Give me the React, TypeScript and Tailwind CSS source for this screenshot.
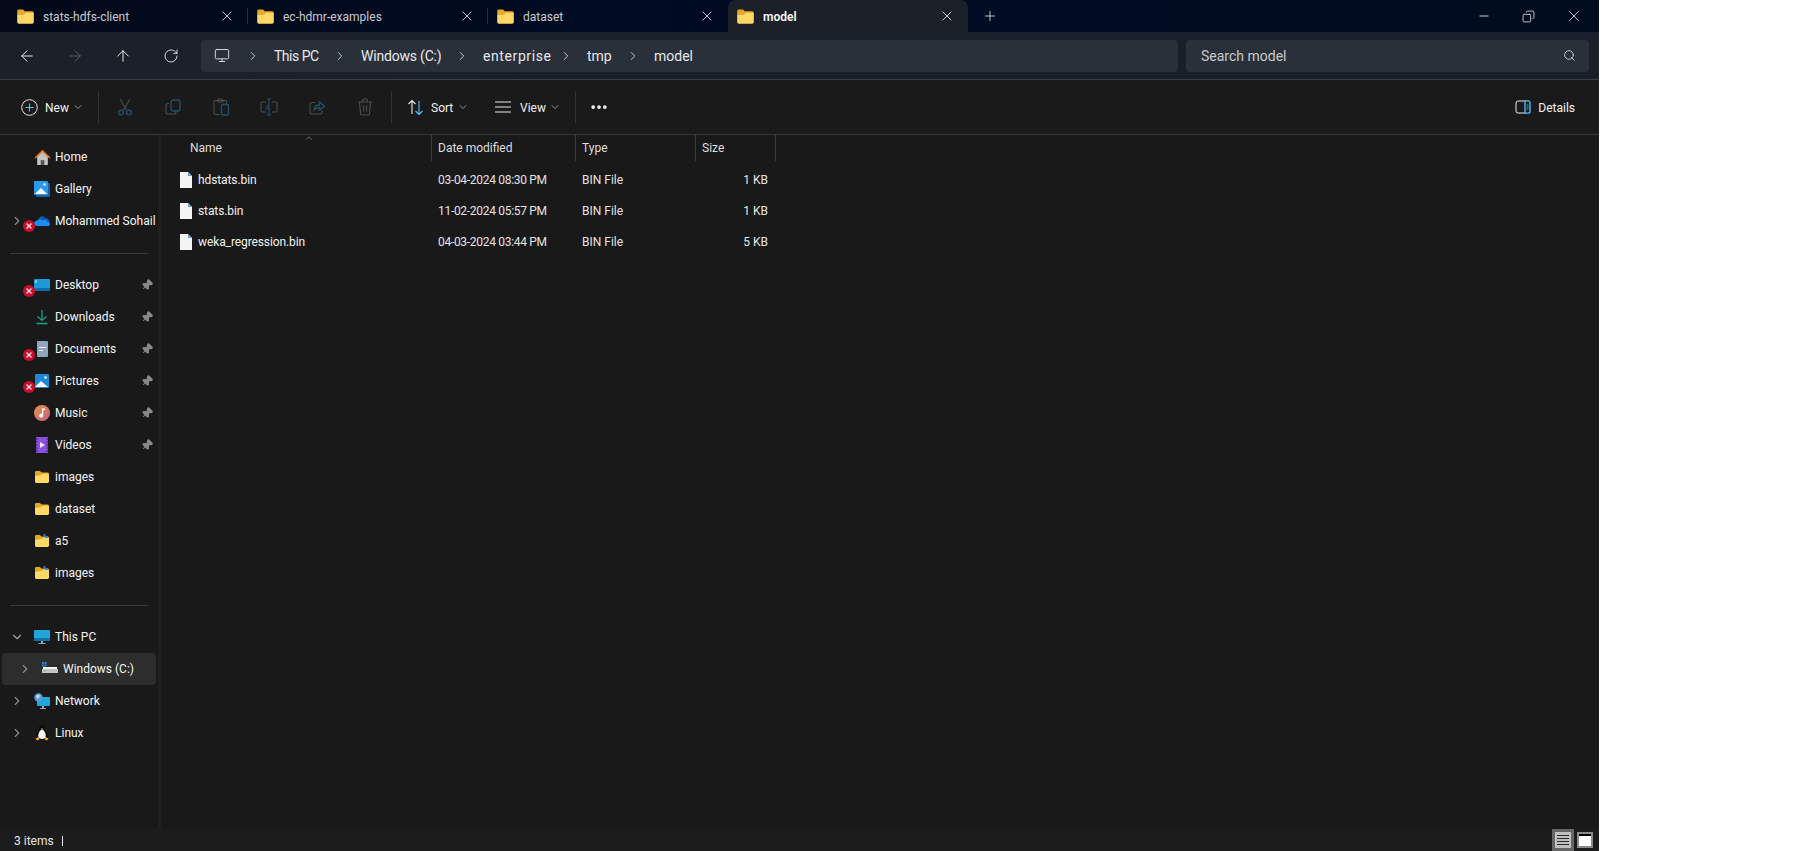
import { ArrowLeft, ArrowRight, ArrowUp, ChevronDown, ChevronRight, ChevronUp, Copy, Ellipsis, Minus, Monitor, Pin, Plus, RotateCw, Search, X } from 'lucide-react';

const font = "font-['Roboto','Liberation_Sans',sans-serif]";

const FolderIcon = ({ quick = false, className = 'w-4 h-4' }: { quick?: boolean; className?: string }) => (
  <svg viewBox="0 0 16 16" className={className}>
    <path d="M1 3.500C1 2.700 1.600 2 2.400 2h3.400l1.700 1.600h6.100c.8 0 1.400.6 1.400 1.400v1H1z" fill="#e8a726" />
    <path d="M1 6.200l6-.2 1.400-1.200h5.200c.8 0 1.400.6 1.400 1.400v6.400c0 .8-.6 1.400-1.400 1.400H2.400c-.8 0-1.400-.6-1.400-1.400z" fill="#ffd868" />
    {quick && <path d="M9.500 1h2v2h2v2h-2v-1h-2z" fill="#2a7fc4" />}
  </svg>
);

const FileIcon = () => (
  <svg viewBox="0 0 14 16" className="w-[14px] h-4 shrink-0">
    <path d="M1 0h8l4 4v12H1z" fill="#f4f4f4" />
    <path d="M9 0l4 4H9z" fill="#5aa5d6" />
  </svg>
);

const ErrorBadge = ({ top }: { top: string }) => (
  <span className={`absolute left-[-11px] flex h-3 w-3 items-center justify-center rounded-full bg-[#c80f2a] ${top}`}>
    <X className="h-2 w-2 text-[#f4d8dc]" strokeWidth={4} />
  </span>
);

const HomeIcon = () => (
  <svg viewBox="0 0 16 16" className="w-[17px] h-[17px] shrink-0">
    <path d="M3 7l5-5 5 5v8H3z" fill="#c4c4c4" />
    <path d="M6.300 15v-4.500h3.400V15z" fill="#555" />
    <path d="M0.500 8L8 .7 15.500 8l-1 1L8 3 1.500 9z" fill="#e8782a" />
  </svg>
);
const GalleryIcon = () => (
  <svg viewBox="0 0 16 16" className="w-4 h-4">
    <rect x="2" y="2" width="14" height="14" rx="1" fill="#1c5fa8" />
    <rect x="0" y="0" width="14" height="14" rx="1" fill="#2a9bea" />
    <path d="M1 13l6-6 6 6z" fill="#fff" />
    <circle cx="10.500" cy="3.500" r="1.200" fill="#fff" />
  </svg>
);
const CloudIcon = () => (
  <svg viewBox="0 0 16 12" className="w-4 h-3">
    <path d="M5 3.500C6 1 9.500 .5 11 3c2.500-.3 4.500 1.500 4.800 4L9 10H4z" fill="#0a5cb8" />
    <path d="M3.500 11C1.500 11 .2 9.700 .2 8.200s1.200-2.700 3-2.800C4.500 3.700 7 3.700 8.500 5.500 11 4.500 13 5.500 13.500 7.300c1.300-.3 2.300.3 2.500 1.200.2 1.300-.8 2.500-2 2.500z" fill="#1c8cf0" />
  </svg>
);
const DesktopIcon = () => (
  <svg viewBox="0 0 16 13" className="w-4 h-[13px]">
    <rect width="16" height="12" rx="1" fill="#1d9ad6" />
    <path d="M0 9h16v2a1 1 0 01-1 1H1a1 1 0 01-1-1z" fill="#0c6ea8" />
    <rect x="1.500" y="1" width="1" height="3" fill="#e9f6fc" />
  </svg>
);
const DownloadIcon = () => (
  <svg viewBox="0 0 16 16" className="w-4 h-4" fill="none" stroke="#15a083" strokeWidth="1.300">
    <path d="M8 1v10M3.500 7.500L8 11.500l4.500-4" />
    <path d="M2.500 14.500h11" strokeWidth="1.600" />
  </svg>
);
const DocumentsIcon = () => (
  <svg viewBox="0 0 16 16" className="w-4 h-4">
    <rect x="3" width="11" height="16" rx="1" fill="#8ea5bd" />
    <rect x="5" y="6" width="7" height="1" fill="#eef2f6" />
    <rect x="5" y="9" width="4" height="1" fill="#eef2f6" />
  </svg>
);
const PicturesIcon = () => (
  <svg viewBox="0 0 16 16" className="w-4 h-4">
    <rect x="1" y="1" width="14" height="14" rx="1" fill="#1f86d8" />
    <path d="M1 14l6-6 7 6z" fill="#fff" />
    <circle cx="11.500" cy="4.500" r="1.200" fill="#fff" />
  </svg>
);
const MusicIcon = () => (
  <svg viewBox="0 0 16 16" className="w-4 h-4">
    <defs>
      <linearGradient id="music-grad" x1="0" y1="0" x2="1" y2="1">
        <stop offset="0" stopColor="#e8924c" />
        <stop offset="1" stopColor="#c9607e" />
      </linearGradient>
    </defs>
    <circle cx="8" cy="8" r="8" fill="url(#music-grad)" />
    <path d="M8 3.500h3v1.500H9.200v5.500a2 2 0 11-1.200-1.800z" fill="#fff" />
  </svg>
);
const VideosIcon = () => (
  <svg viewBox="0 0 16 16" className="w-4 h-4">
    <rect x="2" width="12" height="16" fill="#8a4ee0" />
    <path d="M6 5l5 3-5 3z" fill="#f0e6ff" />
    <path d="M2 2h1.500M2 5h1.500M2 8h1.500M2 11h1.500M2 14h1.500M12.500 2H14M12.500 5H14M12.500 8H14M12.500 11H14M12.500 14H14" stroke="#2c1a50" strokeWidth="1" />
  </svg>
);
const ThisPcIcon = () => (
  <svg viewBox="0 0 16 16" className="w-4 h-4">
    <rect y="1" width="16" height="11" rx="1" fill="#22a5dc" />
    <path d="M0 9h16v2a1 1 0 01-1 1H1a1 1 0 01-1-1z" fill="#0e72a8" />
    <path d="M7 12h2v2H7zM4.500 14h7v1h-7z" fill="#9aa3aa" />
  </svg>
);
const DriveIcon = () => (
  <svg viewBox="0 0 16 14" className="w-4 h-[14px]">
    <path d="M1 5h14v2H1z" fill="#f2f2f2" />
    <path d="M0 7h16v4H0z" fill="#c3c3c3" />
    <rect x="2" y="8.500" width="1.500" height="1" fill="#31c75a" />
    <path d="M0 0h2v2H0zM2.500 0h2v2h-2zM0 2.500h2v2H0zM2.500 2.500h2v2h-2z" fill="#1a86d8" />
  </svg>
);
const NetworkIcon = () => (
  <svg viewBox="0 0 16 16" className="w-4 h-4">
    <rect x="3" y="4" width="13" height="9" rx="1" fill="#22a5dc" />
    <path d="M8 13h2v2H8zM6 15h6v1H6z" fill="#9aa3aa" />
    <circle cx="4.500" cy="4.500" r="4.200" fill="#5a9ccf" />
    <path d="M2 3l2-1.500 2 1-1 2.500-2 .5z" fill="#b8dcef" />
  </svg>
);
const LinuxIcon = () => (
  <svg viewBox="0 0 16 16" className="w-4 h-4">
    <path d="M8 0c2 0 3 1.500 3 3.500 0 2 3 5 3 8 0 2-2 3-6 3s-6-1-6-3c0-3 3-6 3-8C5 1.500 6 0 8 0z" fill="#0c0c0c" />
    <path d="M8 4.500c2 0 3.800 4 3.800 6.500 0 2-1.800 3-3.800 3s-3.800-1-3.800-3C4.200 8.500 6 4.500 8 4.500z" fill="#f4f4f4" />
    <path d="M6.800 3.500h2.400L8 5z" fill="#efaa22" />
    <path d="M1.500 13.500l3-1.500 1 2.500-2.500 1zM14.500 13.500l-3-1.500-1 2.500 2.500 1z" fill="#efaa22" />
  </svg>
);

// command bar icons, two tone like the disabled state in explorer
const gray = '#4c4c4c';
const blue = '#24506e';

const CutIcon = () => (
  <svg viewBox="0 0 16 18" className="h-[18px] w-4" fill="none" strokeWidth="1.100">
    <path d="M3 1l6.500 11M13 1L6.500 12" stroke={gray} />
    <circle cx="4" cy="14.500" r="2.400" stroke={blue} strokeWidth="1.300" />
    <circle cx="12" cy="14.500" r="2.400" stroke={blue} strokeWidth="1.300" />
  </svg>
);
const CopyIcon = () => (
  <svg viewBox="0 0 16 16" className="h-4 w-4" fill="none" strokeWidth="1.100">
    <path d="M4 4.500H3a2 2 0 00-2 2V13a2 2 0 002 2h6a2 2 0 002-2v-1" stroke={gray} />
    <rect x="6" y="1" width="9" height="11" rx="2.500" stroke={blue} strokeWidth="1.300" />
  </svg>
);
const PasteIcon = () => (
  <svg viewBox="0 0 16 18" className="h-[18px] w-4" fill="none" strokeWidth="1.100">
    <path d="M7 16.500H2.500a1.500 1.500 0 01-1.500-1.500V4a1.500 1.500 0 011.500-1.500H12A1.500 1.500 0 0113.500 4v2" stroke={gray} />
    <rect x="4.500" y="1" width="5.500" height="3" rx="1" stroke={gray} />
    <rect x="8.500" y="6.500" width="7" height="10.500" rx="1.500" stroke={blue} strokeWidth="1.300" />
  </svg>
);
const RenameIcon = () => (
  <svg viewBox="0 0 18 18" className="h-[18px] w-[18px]" fill="none" strokeWidth="1.100">
    <path d="M6 4H2.500A1.500 1.500 0 001 5.500v7A1.500 1.500 0 002.500 14H6M12 4h3.500A1.500 1.500 0 0117 5.500v7a1.500 1.500 0 01-1.500 1.500H12" stroke={gray} />
    <path d="M7 1h4M9 1v16M7 17h4" stroke={blue} />
    <text x="5" y="12" fontSize="8" fill={blue} fontFamily="Roboto, sans-serif">A</text>
  </svg>
);
const ShareIcon = () => (
  <svg viewBox="0 0 16 16" className="h-4 w-4" fill="none" strokeWidth="1.100">
    <path d="M6 3.500H3a2 2 0 00-2 2V13a2 2 0 002 2h8a2 2 0 002-2v-2" stroke={gray} />
    <path d="M5 11c.3-3.500 2.800-5 5.500-5V3L15.500 7.200 10.500 11V8.500C8 8.500 6.500 9.300 5 11z" stroke={blue} strokeWidth="1.300" />
  </svg>
);
const DeleteIcon = () => (
  <svg viewBox="0 0 16 18" className="h-[18px] w-4" fill="none" stroke={gray} strokeWidth="1.200">
    <path d="M1 4h14M5.500 4V2.500A1.500 1.500 0 017 1h2a1.500 1.500 0 011.500 1.500V4" />
    <path d="M2.500 4l1 11.500a1.500 1.500 0 001.500 1.500h6a1.500 1.500 0 001.500-1.500L13.500 4" />
    <path d="M6.500 7.500v6M9.500 7.500v6" />
  </svg>
);
const NewIcon = () => (
  <svg viewBox="0 0 17 17" className="h-[17px] w-[17px]" fill="none">
    <circle cx="8.500" cy="8.500" r="7.800" stroke="#e8e8e8" strokeWidth="1" />
    <path d="M8.500 4.500v8M4.500 8.500h8" stroke="#4cc2ff" strokeWidth="1.100" />
  </svg>
);
const SortIcon = () => (
  <svg viewBox="0 0 17 17" className="h-[17px] w-[17px]" fill="none" strokeWidth="1.100">
    <path d="M5 15V1.500M1.500 5L5 1.500 8.500 5" stroke="#e8e8e8" />
    <path d="M12 2v13.500M8.500 12l3.500 3.500 3.500-3.500" stroke="#4cc2ff" />
  </svg>
);
const ViewIcon = () => (
  <svg viewBox="0 0 16 12" className="h-3 w-4" stroke="#e8e8e8" strokeWidth="1.100">
    <path d="M0 1h16M0 6h16M0 11h16" />
  </svg>
);
const DetailsIcon = () => (
  <svg viewBox="0 0 16 14" className="h-[14px] w-4" fill="none">
    <path d="M10 1H3a2 2 0 00-2 2v8a2 2 0 002 2h7" stroke="#e8e8e8" strokeWidth="1" />
    <path d="M10 .8h3a2 2 0 012 2v8.400a2 2 0 01-2 2h-3z" stroke="#4cc2ff" strokeWidth="1.300" />
    <path d="M11.500 5h2M11.500 7h2M11.500 9h2" stroke="#4cc2ff" strokeWidth=".8" />
  </svg>
);

interface TabProps {
  title: string;
  active?: boolean;
  divider?: boolean;
}

const Tab = ({ title, active, divider }: TabProps) => (
  <div className={`relative flex h-8 w-[240px] items-center pl-[8px] pr-[13px] ${active ? 'rounded-t-lg bg-[#1b2029]' : ''}`}>
    <FolderIcon className="h-[19px] w-[19px] shrink-0" />
    <span className={`ml-[8px] flex-1 pt-[2px] text-[12px] ${active ? 'font-semibold text-[#fbfbfb]' : 'text-[#c9ccd1]'}`}>{title}</span>
    <X className="h-4 w-4 text-[#e8e8e8]" strokeWidth={1.300} />
    {divider && <span className="absolute right-0 top-[8px] h-4 w-px bg-[#2a2f3a]" />}
  </div>
);

interface SideItemProps {
  label: string;
  icon: React.ReactNode;
  chevron?: 'right' | 'down';
  pinned?: boolean;
  error?: string;
  selected?: boolean;
  indent?: boolean;
}

const SideItem = ({ label, icon, chevron, pinned, error, selected, indent }: SideItemProps) => (
  <div className={`relative flex h-8 items-center rounded ${selected ? 'bg-[#2d2d2d]' : ''} ${indent ? 'pl-[40px]' : 'pl-[32px]'}`}>
    {chevron === 'right' && <ChevronRight className={`absolute top-[9px] h-[14px] w-[14px] text-[#8a8a8a] ${indent ? 'left-[16px]' : 'left-[8px]'}`} strokeWidth={2} />}
    {chevron === 'down' && <ChevronDown className="absolute left-[8px] top-[9px] h-[14px] w-[14px] text-[#a0a0a0]" strokeWidth={2} />}
    <span className="relative flex h-4 w-4 shrink-0 items-center justify-center">
      {icon}
      {error && <ErrorBadge top={error} />}
    </span>
    <span className="ml-[5px] flex-1 whitespace-nowrap text-[12px] text-[#f5f5f5]">{label}</span>
    {pinned && <Pin className="mr-[3px] h-3 w-3 rotate-45 fill-[#8a8a8a] text-[#8a8a8a]" />}
  </div>
);

const Divider = () => <div className="mx-2 mb-[15px] mt-4 h-px bg-[#3a3a3a]" />;

const ToolButton = ({ children }: { children: React.ReactNode }) => (
  <span className="flex w-[48px] items-center justify-center">{children}</span>
);

const ToolSep = ({ className = '' }: { className?: string }) => <span className={`h-8 w-px bg-[#333333] ${className}`} />;

const Crumb = ({ label, width }: { label: string; width: string }) => (
  <>
    <ChevronRight className="h-[14px] w-[14px] text-[#d8d8d8]" strokeWidth={1.500} />
    <span className={`ml-[14px] mr-[14px] whitespace-nowrap pt-[2px] text-[14px] text-[#e6e8eb] ${width}`}>{label}</span>
  </>
);

const files = [
  { name: 'hdstats.bin', date: '03-04-2024 08:30 PM', size: '1 KB' },
  { name: 'stats.bin', date: '11-02-2024 05:57 PM', size: '1 KB' },
  { name: 'weka_regression.bin', date: '04-03-2024 03:44 PM', size: '5 KB' },
];

export default function App() {
  return (
    <div className={`flex h-[851px] w-full overflow-hidden bg-white ${font}`}>
      <div className="flex h-full w-[1599px] flex-col bg-[#191919]">
        {/* tab strip */}
        <div className="flex h-8 shrink-0 items-center bg-gradient-to-r from-[#020919] via-[#000b24] to-[#010d1e] pl-[8px]">
          <Tab title="stats-hdfs-client" divider />
          <Tab title="ec-hdmr-examples" divider />
          <Tab title="dataset" />
          <Tab title="model" active />
          <Plus className="ml-[14px] h-4 w-4 text-[#e8e8e8]" strokeWidth={1.200} />
          <div className="ml-auto flex items-center text-[#e8e8e8]">
            <Minus className="mr-[31px] h-[14px] w-[14px]" strokeWidth={1.500} />
            <Copy className="mr-[30px] h-[13px] w-[13px] -scale-x-100" strokeWidth={1.500} />
            <X className="mr-[16px] h-[18px] w-[18px]" strokeWidth={1.100} />
          </div>
        </div>

        {/* nav bar */}
        <div className="flex h-12 shrink-0 items-center border-b border-[#3c3f44] bg-gradient-to-r from-[#1b2029] to-[#18202c] pl-[18px]">
          <ArrowLeft className="h-[18px] w-[18px] text-[#eeeeee]" strokeWidth={1.300} />
          <ArrowRight className="ml-[30px] h-[18px] w-[18px] text-[#5e6268]" strokeWidth={1.300} />
          <ArrowUp className="ml-[30px] h-[18px] w-[18px] text-[#eeeeee]" strokeWidth={1.300} />
          <RotateCw className="ml-[31px] h-4 w-4 text-[#eeeeee]" strokeWidth={1.300} />
          <div className="ml-[22px] flex h-8 w-[977px] items-center rounded bg-[#2a3039] pl-[13px]">
            <Monitor className="mr-[16px] h-[17px] w-[16px] text-[#e0e0e0]" strokeWidth={1.400} />
            <Crumb label="This PC" width="w-[45px] tracking-[-0.5px]" />
            <Crumb label="Windows (C:)" width="w-[80px] tracking-[-0.2px]" />
            <Crumb label="enterprise" width="w-[62px] tracking-[0.6px]" />
            <Crumb label="tmp" width="w-[25px]" />
            <Crumb label="model" width="w-[39px]" />
          </div>
          <div className="ml-2 flex h-8 w-[403px] items-center justify-between rounded bg-[#2a3039] pl-[15px] pr-[13px]">
            <span className="pt-[2px] text-[14px] text-[#c6c9cd]">Search model</span>
            <Search className="h-[13px] w-[13px] text-[#e0e0e0]" strokeWidth={1.500} />
          </div>
        </div>

        {/* command bar */}
        <div className="flex h-[55px] shrink-0 items-center border-b border-[#383838] bg-[#1a1a1a] pl-[21px] pr-[24px] text-[12px] text-[#f2f2f2]">
          <NewIcon />
          <span className="ml-[7px] w-[24px] pt-px">New</span>
          <ChevronDown className="ml-[3px] h-3 w-3 text-[#b8b8b8]" strokeWidth={1.500} />
          <ToolSep className="ml-[14px] mr-[2px]" />
          <ToolButton><CutIcon /></ToolButton>
          <ToolButton><CopyIcon /></ToolButton>
          <ToolButton><PasteIcon /></ToolButton>
          <ToolButton><RenameIcon /></ToolButton>
          <ToolButton><ShareIcon /></ToolButton>
          <ToolButton><DeleteIcon /></ToolButton>
          <ToolSep className="ml-[2px]" />
          <span className="ml-[15px]"><SortIcon /></span>
          <span className="ml-[7px] w-[23px] pt-px">Sort</span>
          <ChevronDown className="ml-[3px] h-3 w-3 text-[#b8b8b8]" strokeWidth={1.500} />
          <span className="ml-[26px]"><ViewIcon /></span>
          <span className="ml-[9px] w-[26px] pt-px">View</span>
          <ChevronDown className="ml-[3px] h-3 w-3 text-[#b8b8b8]" strokeWidth={1.500} />
          <ToolSep className="ml-[14px]" />
          <Ellipsis className="ml-[13px] h-5 w-5 text-[#f2f2f2]" strokeWidth={2.500} />
          <span className="ml-auto"><DetailsIcon /></span>
          <span className="ml-[7px] pt-px">Details</span>
        </div>

        {/* body */}
        <div className="flex min-h-0 flex-1">
          <aside className="w-[158px] shrink-0 px-[2px] pt-[6px]">
            <SideItem label="Home" icon={<HomeIcon />} />
            <SideItem label="Gallery" icon={<GalleryIcon />} />
            <SideItem label="Mohammed Sohail" icon={<CloudIcon />} chevron="right" error="top-[7px]" />
            <Divider />
            <SideItem label="Desktop" icon={<DesktopIcon />} pinned error="top-[8px]" />
            <SideItem label="Downloads" icon={<DownloadIcon />} pinned />
            <SideItem label="Documents" icon={<DocumentsIcon />} pinned error="top-[8px]" />
            <SideItem label="Pictures" icon={<PicturesIcon />} pinned error="top-[8px]" />
            <SideItem label="Music" icon={<MusicIcon />} pinned />
            <SideItem label="Videos" icon={<VideosIcon />} pinned />
            <SideItem label="images" icon={<FolderIcon />} />
            <SideItem label="dataset" icon={<FolderIcon />} />
            <SideItem label="a5" icon={<FolderIcon quick />} />
            <SideItem label="images" icon={<FolderIcon quick />} />
            <Divider />
            <SideItem label="This PC" icon={<ThisPcIcon />} chevron="down" />
            <SideItem label="Windows (C:)" icon={<DriveIcon />} chevron="right" selected indent />
            <SideItem label="Network" icon={<NetworkIcon />} chevron="right" />
            <SideItem label="Linux" icon={<LinuxIcon />} chevron="right" />
          </aside>

          <main className="relative flex-1 border-l-[3px] border-[#202020]">
            <ChevronUp className="absolute left-[142px] top-[-2px] h-[10px] w-[12px] text-[#a0a0a0]" strokeWidth={1.500} />
            <div className="flex h-[26px] items-center text-[12px] text-[#dedede]">
              <span className="flex h-full w-[271px] items-center border-r border-[#3a3a3a] pl-[29px]">Name</span>
              <span className="flex h-full w-[144px] items-center border-r border-[#3a3a3a] pl-[6px]">Date modified</span>
              <span className="flex h-full w-[120px] items-center border-r border-[#3a3a3a] pl-[6px]">Type</span>
              <span className="flex h-full w-[80px] items-center border-r border-[#3a3a3a] pl-[6px]">Size</span>
            </div>
            <div className="pt-[3px]">
              {files.map((file) => (
                <div key={file.name} className="flex h-[31px] items-center text-[12px] text-[#e4e4e4]">
                  <span className="flex w-[271px] items-center pl-[18px]">
                    <FileIcon />
                    <span className="ml-[5px] tracking-[-0.1px] text-[#f2f2f2]">{file.name}</span>
                  </span>
                  <span className="w-[144px] whitespace-nowrap pl-[6px] tracking-[-0.3px]">{file.date}</span>
                  <span className="w-[120px] pl-[6px]">BIN File</span>
                  <span className="w-[72px] text-right">{file.size}</span>
                </div>
              ))}
            </div>
          </main>
        </div>

        {/* status bar */}
        <div className="flex h-[22px] shrink-0 items-center bg-[#1c1c1c] pl-[14px] text-[12px] text-[#e4e4e4]">
          <span className="pt-[2px]">3 items</span>
          <span className="ml-2 mt-px h-[10px] w-px bg-[#f0f0f0]" />
          <div className="ml-auto flex h-full items-center pr-[6px]">
            <span className="flex h-full w-[22px] items-center justify-center bg-[#666666]">
              <span className="flex h-4 w-4 items-center justify-center bg-[#c0c0c0]">
                <svg viewBox="0 0 12 10" className="h-[10px] w-3" stroke="#2a2a2a" strokeWidth="1">
                  <path d="M0 .5h12M0 3.500h12M0 6.500h12M0 9.500h12" />
                </svg>
              </span>
            </span>
            <span className="ml-[3px] flex h-4 w-4 items-start justify-center bg-[#8a8a8a] p-[2px]">
              <span className="h-full w-full border-t-2 border-black bg-white" />
            </span>
          </div>
        </div>
      </div>
    </div>
  );
}
